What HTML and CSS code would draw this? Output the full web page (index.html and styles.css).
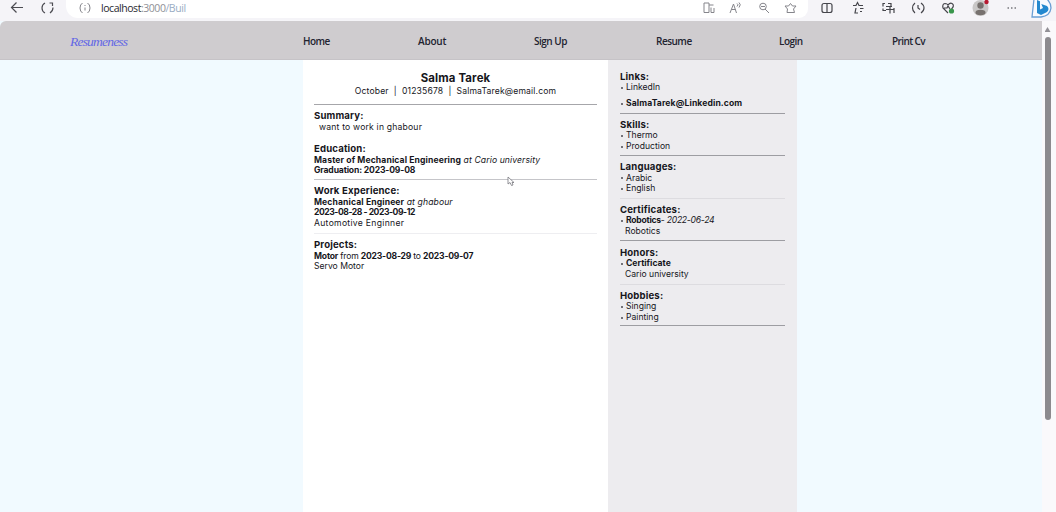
FILE: index.html
```
<!DOCTYPE html>
<html lang="en">
<head>
<meta charset="utf-8">
<title>Resumeness</title>
<link rel="stylesheet" href="styles.css">
</head>
<body>
<header class="browser">
  <svg class="nav-icons" width="66" height="22" viewBox="0 0 66 22"><path d="M23 7.500H12M16.500 2.500L11.500 7.500l5 5M45 3Q42 4.500 42 8t3 5M49.500 3h3v3M50 13q3-2 3-5.500"/></svg>
  <div class="address">
    <svg width="14" height="14" viewBox="0 0 14 14"><path d="M4.500 2Q2 3.500 2 7t2.500 5M9.500 2Q12 3.500 12 7t-2.500 5M7 6.500v3M7 4v1"/></svg>
    <span class="url">localhost<span class="port">:3000</span><span class="path">/Buil</span></span>
    <svg class="address-icons" width="110" height="22" viewBox="0 0 110 22">
      <path d="M3 3h5v9.500H3zM8 5h4.500M10 7.500v5h3V8M29 13l3.500-9 3 9M30.500 9.500h4M36 3.500q2 1 0 3M38 2.500q2.500 2 0 5M64 9l4 4M60 6.500h4"/>
      <circle cx="62" cy="6.500" r="3.300"/>
      <path d="M84 6h3.500l2-2.500L91.500 6H95L92.500 9l1 3.500H86l.500-3.500z"/>
    </svg>
  </div>
  <svg class="tools" width="248" height="22" viewBox="808 0 248 22">
    <g class="dark">
      <path d="M827 3.500h-3q-2 0-2 2v5q0 2 2 2h3zM827 3.500h3q2 0 2 2v5q0 2-2 2h-3"/>
      <path d="M853 5.500h3l1.500-3 1.500 3h4M856 8l-1 5h3M860 8.500h3.500M860 11.500h2"/>
      <path d="M885 3.500h-2v3M888 3.500h3v3M883 8.500v2h3M886 6.500h6M890 6.500v7M886 9.500h8M894 8v5"/>
      <path d="M915 3Q912.500 5 912.500 8t2.500 5M921 3q3 2 3 5t-3 5M918 5v3l2 1.500"/>
      <path d="M948 13l-5-5q-1-4 2-4.500 2 0 3 1.500 2-2.500 4-1.500 3 2-.500 5.500M944 8h3l1-2 2 3"/>
    </g>
    <circle class="ok" cx="951.500" cy="11" r="2.600"/>
    <circle class="avatar" cx="980.500" cy="8" r="8"/>
    <circle class="person" cx="980.500" cy="5.500" r="3.200"/><ellipse class="person" cx="980.500" cy="12.500" rx="5" ry="2.800"/>
    <circle class="alert" cx="986.500" cy="2" r="2.200"/>
    <path class="dots" d="M1007.500 8h1.500M1011 8h1.500M1014.500 8h1.500"/>
    <path class="bing-ring" d="M1034-1l-2 18h9q9-1 10-9 0-5-4-9"/>
    <path class="bing" d="M1037 0l3 1.200v8.300l3-1.500-1.700-4L1047 6q3 3 0 6l-6 3-4-2z"/>
  </svg>
</header>
<div class="viewport">
  <div class="page">
    <nav class="menu">
      <span class="brand">Resumeness</span>
      <span class="home">Home</span><span class="about">About</span><span class="signup">Sign Up</span><span class="resume">Resume</span><span class="login">Login</span><span class="print">Print Cv</span>
    </nav>
    <div class="cv">
      <main class="main">
        <h1>Salma Tarek</h1>
        <p class="contact">October&nbsp; |&nbsp; 01235678&nbsp; |&nbsp; SalmaTarek@email.com</p>
        <hr>
        <section class="summary"><h2>Summary:</h2><p class="indent">want to work in ghabour</p></section>
        <section class="education"><h2>Education:</h2><p class="degree"><b>Master of Mechanical Engineering</b> <i>at Cario university</i></p><p><b class="graduation">Graduation: 2023-09-08</b></p></section>
        <hr class="soft">
        <section class="work"><h2>Work Experience:</h2><p class="degree"><b>Mechanical Engineer</b> <i>at ghabour</i></p><p><b class="dates">2023-08-28 - 2023-09-12</b></p><p class="role">Automotive Enginner</p></section>
        <hr class="faint">
        <section><h2>Projects:</h2><p class="project"><b>Motor</b> from <b>2023-08-29</b> to <b>2023-09-07</b></p><p>Servo Motor</p></section>
      </main>
      <aside class="side">
        <section class="links"><h2>Links:</h2><p class="item">LinkedIn</p><p class="item link"><b>SalmaTarek@Linkedin.com</b></p></section>
        <section><h2>Skills:</h2><p class="item">Thermo</p><p class="item">Production</p></section>
        <section class="light"><h2>Languages:</h2><p class="item">Arabic</p><p class="item">English</p></section>
        <section><h2>Certificates:</h2><p class="item certificate"><b>Robotics</b>- <i>2022-06-24</i></p><p class="indent">Robotics</p></section>
        <section class="honors light"><h2>Honors:</h2><p class="item"><b>Certificate</b></p><p class="indent">Cario university</p></section>
        <section class="hobbies"><h2>Hobbies:</h2><p class="item">Singing</p><p class="item">Painting</p></section>
      </aside>
    </div>
  </div>
  <div class="scrollbar"><span class="up"></span><span class="thumb"></span></div>
</div>
<svg class="cursor" width="8" height="11" viewBox="0 0 8 11"><path d="M1 1v7l2-1.500L4.500 9.500 6 9 5 6.500h2z"/></svg>
</body>
</html>
```
FILE: styles.css
```
* { box-sizing: border-box; }
body { margin: 0; width: 1056px; height: 512px; overflow: hidden; background: #f5f4f8; font-family: Inter, "Open Sans", sans-serif; color: #16161c; }
h1, h2, p { margin: 0; white-space: nowrap; }
svg { display: block; flex: none; fill: none; stroke: #85858b; stroke-width: 1; }
.browser { display: flex; height: 21px; overflow: hidden; }
.nav-icons { stroke: #4c4c52; stroke-width: 1.200; }
.address { display: flex; width: 742px; height: 18px; padding-left: 12px; background: #fff; border-radius: 0 0 9px 12px; }
.address > svg:first-child { margin-top: 1px; }
.url { margin-left: 9px; font: 10.500px/16px "Open Sans", sans-serif; color: #29292f; letter-spacing: -.45px; }
.port { color: #909096; }
.path { color: #9aacc4; }
.address-icons { margin-left: auto; margin-right: -3px; }
.dark { stroke: #45454b; stroke-width: 1.200; }
.ok { fill: #39964c; stroke: none; }
.avatar { fill: #c9c7c7; stroke: none; }
.person { fill: #77716f; stroke: none; }
.alert { fill: #b71931; stroke: none; }
.dots { stroke: #77777c; stroke-width: 1.300; }
.bing-ring { fill: #f8faff; stroke: #6a9ed4; stroke-width: 1.300; }
.bing { fill: #2388cf; stroke: none; }
.viewport { display: flex; height: 491px; }
.page { width: 1042px; background: #f1faff; }
.menu { display: flex; height: 39px; background: #cfcccf; border-radius: 6px 0 0 0; border-bottom: 1px solid #c6c3c7; font: 600 10px/40px "Open Sans", sans-serif; color: #22232f; white-space: nowrap; letter-spacing: -.2px; }
.menu span { flex: none; }
.brand { width: 233px; margin-left: 70px; font: italic 13.500px/41px "Liberation Serif", serif; color: #6267e5; letter-spacing: -.8px; }
.home { width: 115px; letter-spacing: -.55px; }
.about { width: 116px; }
.signup { width: 122px; letter-spacing: -.5px; }
.resume { width: 123px; letter-spacing: -.5px; }
.login { width: 113px; letter-spacing: -.5px; }
.print { letter-spacing: -.6px; }
.cv { display: flex; width: 494px; height: 452px; margin-left: 303px; background: #fff; }
.main { width: 305px; padding: 11px 11px 0; }
.side { width: 189px; padding: 10.500px 12px 0; background: #edecef; }
h1 { font-size: 11.400px; line-height: 14px; letter-spacing: .15px; text-align: center; }
h2 { font-size: 9.600px; line-height: 11.500px; letter-spacing: .15px; }
p { font-size: 8.600px; line-height: 10.700px; }
.contact { line-height: 13px; letter-spacing: .15px; text-align: center; }
hr { height: 1px; margin: 6px 0 5px; border: 0; background: #a6a6aa; }
.main .soft { margin: 3px 0 5px; background: #c5c5c9; }
.main .faint { margin: 4px 0 5px; background: #eeeef1; }
.indent { padding-left: 5px; }
.summary .indent { letter-spacing: .2px; }
.degree { letter-spacing: .11px; }
.graduation { letter-spacing: -.15px; }
.dates { letter-spacing: -.45px; }
.role { letter-spacing: .3px; }
.project { letter-spacing: -.2px; }
.summary { height: 33px; }
.education { height: 33px; }
.work { height: 44px; }
.side section { height: 42.500px; padding-top: 5px; border-bottom: 1px solid #9d9da2; }
.side .links { height: 43px; padding-top: 0; }
.item { display: flex; align-items: center; white-space: pre; }
.item::before { content: ""; width: 2px; height: 2px; margin: 1px 3px 0 1px; border-radius: 50%; background: #4a4a50; }
.certificate { letter-spacing: -.25px; }
.link { margin-top: 5.300px; letter-spacing: .1px; }
.side .light { border-color: #dddce0; }
.side .honors { height: 44px; padding-top: 5.500px; }
.side .hobbies { height: 41px; padding-top: 4.500px; }
.scrollbar { display: flex; flex-direction: column; width: 14px; align-items: center; background: #faf9fb; }
.up { width: 6px; height: 5px; margin: 6px 3px 5px 0; background: #929096; clip-path: polygon(50% 0, 100% 100%, 0 100%); }
.thumb { width: 6px; height: 383px; margin-right: 3px; background: #8c8a8e; border-radius: 3px; }
.cursor { position: absolute; left: 507px; top: 176px; fill: #fff; stroke: #77777d; stroke-width: .8; }
```
